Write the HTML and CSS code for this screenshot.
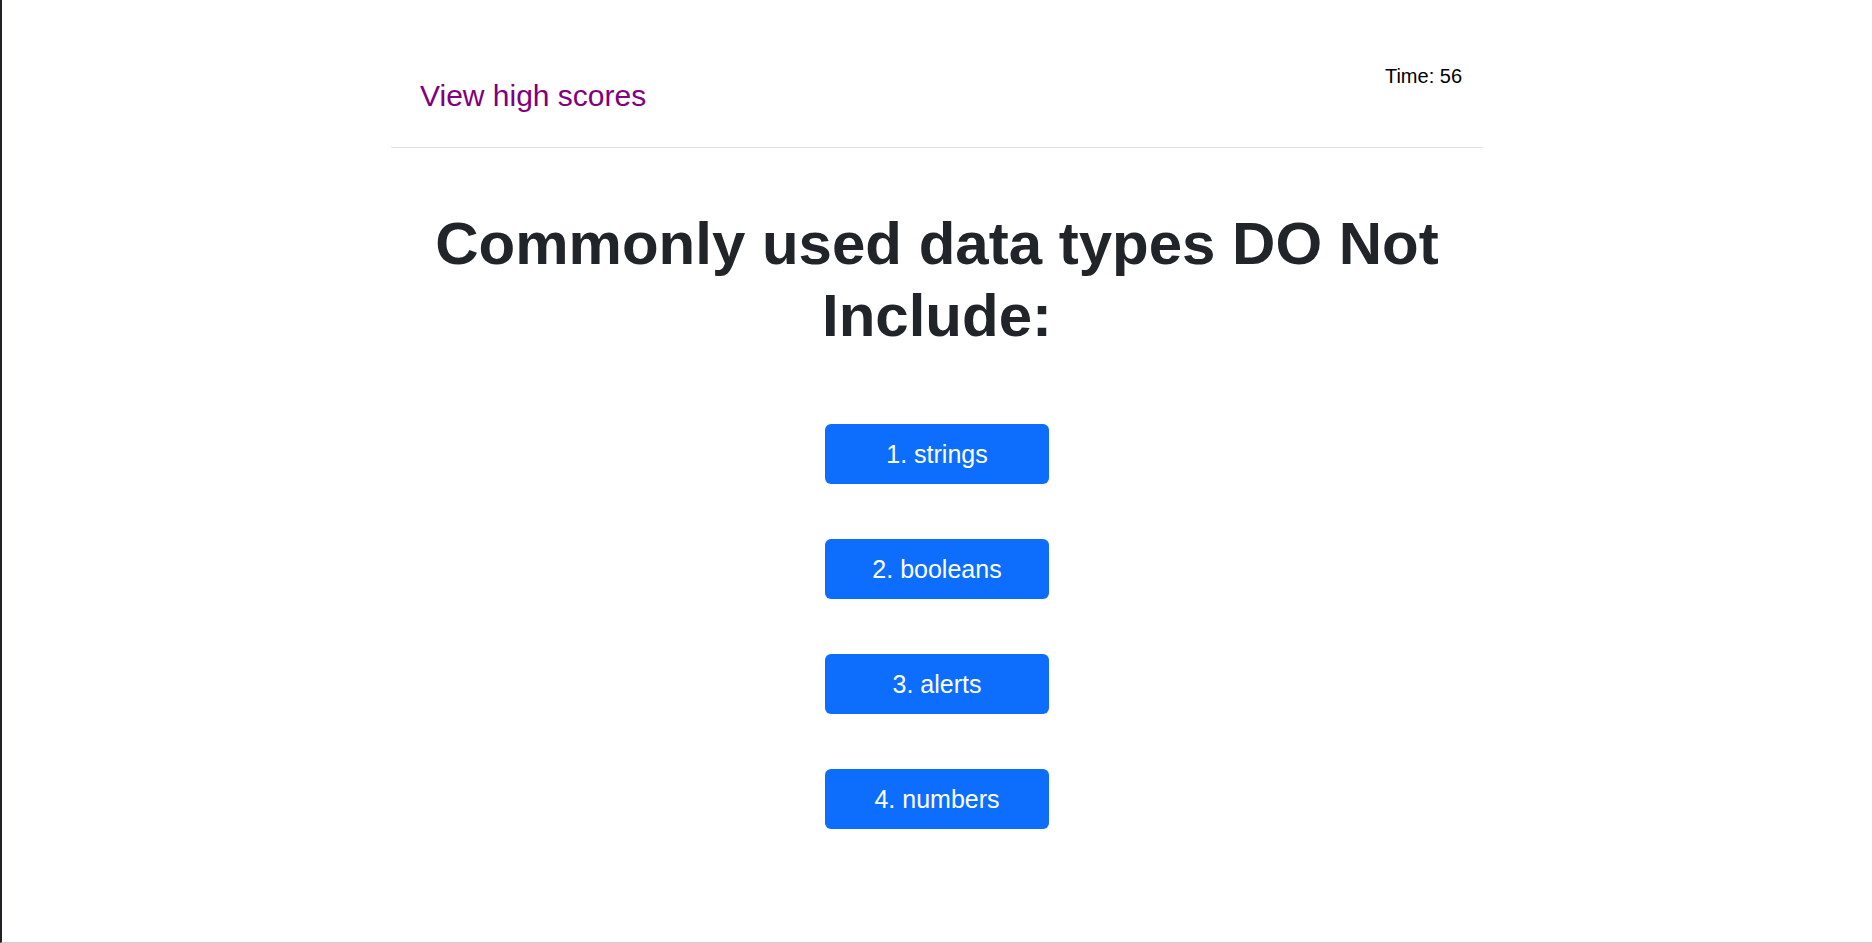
FILE: index.html
```html
<!DOCTYPE html>
<html lang="en">
<head>
<meta charset="utf-8">
<title>Code Quiz</title>
<link rel="stylesheet" href="styles.css">
</head>
<body>
<div class="page">
  <div class="container">
    <header class="header">
      <a class="scores-link" href="#">View high scores</a>
      <div class="timer">Time: 56</div>
    </header>
    <hr class="divider">
    <main class="quiz">
      <h1 class="question">Commonly used data types DO Not Include:</h1>
      <div class="answers">
        <button class="answer">1. strings</button>
        <button class="answer">2. booleans</button>
        <button class="answer">3. alerts</button>
        <button class="answer">4. numbers</button>
      </div>
    </main>
  </div>
</div>
</body>
</html>
```

FILE: styles.css
```css
html, body {
  margin: 0;
  padding: 0;
  background: #ffffff;
}

.page {
  box-sizing: border-box;
  min-height: 100vh;
  border-left: 2px solid #202124;
  border-bottom: 1px solid #cfcfcf;
  font-family: "Liberation Sans", Arial, sans-serif;
}

.container {
  max-width: 1092px;
  margin: 0 auto;
}

.header {
  display: flex;
  justify-content: space-between;
  align-items: flex-start;
  padding: 64px 21px 33px 29px;
}

.scores-link {
  margin-top: 14px;
  font-size: 30px;
  line-height: 36px;
  color: #800080;
  text-decoration: none;
}

.timer {
  font-size: 20px;
  line-height: 24px;
  color: #000000;
}

.divider {
  margin: 0;
  border: 0;
  border-top: 1px solid #e2e2e2;
}

.quiz {
  padding-top: 60px;
}

.question {
  margin: 0 0 72px;
  text-align: center;
  font-size: 60px;
  line-height: 72px;
  font-weight: 700;
  color: #212529;
}

.answers {
  display: flex;
  flex-direction: column;
  align-items: center;
  gap: 55px;
}

.answer {
  width: 224px;
  height: 60px;
  padding: 0;
  border: 0;
  border-radius: 6px;
  background: #0d6efd;
  color: #ffffff;
  font-family: "Liberation Sans", Arial, sans-serif;
  font-size: 25px;
  line-height: 60px;
  cursor: pointer;
}
```
